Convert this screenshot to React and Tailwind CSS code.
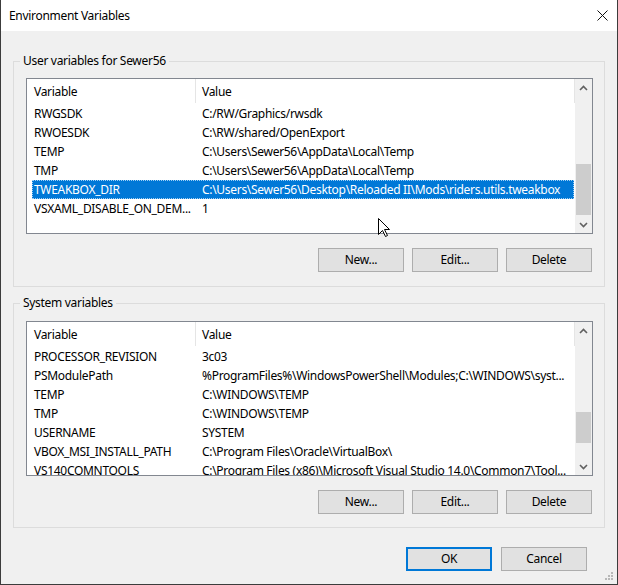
import React from "react";

const userRows = [
  ["RWGSDK", "C:/RW/Graphics/rwsdk"],
  ["RWOESDK", "C:\\RW/shared/OpenExport"],
  ["TEMP", "C:\\Users\\Sewer56\\AppData\\Local\\Temp"],
  ["TMP", "C:\\Users\\Sewer56\\AppData\\Local\\Temp"],
  ["TWEAKBOX_DIR", "C:\\Users\\Sewer56\\Desktop\\Reloaded II\\Mods\\riders.utils.tweakbox"],
  ["VSXAML_DISABLE_ON_DEM...", "1"],
];

const systemRows = [
  ["PROCESSOR_REVISION", "3c03"],
  ["PSModulePath", "%ProgramFiles%\\WindowsPowerShell\\Modules;C:\\WINDOWS\\syst..."],
  ["TEMP", "C:\\WINDOWS\\TEMP"],
  ["TMP", "C:\\WINDOWS\\TEMP"],
  ["USERNAME", "SYSTEM"],
  ["VBOX_MSI_INSTALL_PATH", "C:\\Program Files\\Oracle\\VirtualBox\\"],
  ["VS140COMNTOOLS", "C:\\Program Files (x86)\\Microsoft Visual Studio 14.0\\Common7\\Tool..."],
];

const Chevron = ({ up }) => (
  <svg width="9" height="6" viewBox="0 0 9 6">
    <polyline
      points={up ? "1,5 4.5,1.5 8,5" : "1,1 4.5,4.5 8,1"}
      fill="none"
      stroke="#606060"
      strokeWidth="1.6"
    />
  </svg>
);

// vertical scrollbar, thumb placed by margin inside the track
const Scrollbar = ({ thumbTop, thumbHeight }) => (
  <div className="w-[17px] shrink-0 bg-[#f0f0f0] flex flex-col">
    <div className="h-[17px] flex items-center justify-center">
      <Chevron up />
    </div>
    <div className="flex-1 flex flex-col">
      <div style={{ height: thumbTop }} />
      <div className="mx-[1px] bg-[#cdcdcd]" style={{ height: thumbHeight }} />
    </div>
    <div className="h-[17px] flex items-center justify-center">
      <Chevron />
    </div>
  </div>
);

const ListView = ({ rows, selected, height, thumbTop, thumbHeight }) => (
  <div className="flex border border-[#828790] bg-white" style={{ height }}>
    <div className="flex-1 min-w-0 flex flex-col overflow-hidden">
      <div className="h-[25px] shrink-0 flex items-start">
        <div className="w-[168px] h-[24px] pl-[7px] pt-[1px] flex items-center">Variable</div>
        <div className="w-px h-[24px] bg-[#e5e5e5]" />
        <div className="flex-1 h-[24px] pl-[6px] pt-[1px] flex items-center">Value</div>
        <div className="w-px h-[24px] bg-[#e5e5e5]" />
      </div>
      {rows.map(([name, value], i) => (
        <div
          key={i}
          className={`h-[19px] shrink-0 ml-[5px] mr-[1px] flex items-center whitespace-nowrap ${
            i === selected ? "bg-[#0078d7] text-white outline outline-1 outline-dotted outline-offset-[-1px] outline-[#9fd0f5]" : ""
          }`}
        >
          <div className="w-[163px] shrink-0 pl-[2px] overflow-hidden">{name}</div>
          <div className="flex-1 pl-[7px] overflow-hidden">{value}</div>
        </div>
      ))}
    </div>
    <Scrollbar thumbTop={thumbTop} thumbHeight={thumbHeight} />
  </div>
);

const Button = ({ children, def }) => (
  <button
    className={`w-[86px] h-[24px] bg-[#e1e1e1] flex items-center justify-center ${
      def ? "border-2 border-[#0078d7]" : "border border-[#adadad]"
    }`}
  >
    {children}
  </button>
);

const Group = ({ label, className, children }) => (
  <div className={`relative mx-[12px] border border-[#dcdcdc] pl-[12px] pr-[11px] ${className}`}>
    <span className="absolute left-[6px] top-[-9px] bg-[#f0f0f0] px-[3px] leading-[16px]">{label}</span>
    {children}
  </div>
);

export default function App() {
  return (
    <div
      className="relative w-[618px] h-[585px] bg-[#f0f0f0] border-l border-r border-b border-[#3c3c3c] text-[12px] tracking-[-0.3px] text-black overflow-hidden"
      style={{ fontFamily: '"Noto Sans", "Open Sans", sans-serif' }}
    >
      {/* title bar */}
      <div className="h-[31px] bg-white flex items-center justify-between pl-[8px] pr-[9px]">
        <span>Environment Variables</span>
        <svg width="11" height="11" viewBox="0 0 11 11">
          <path d="M0.5 0.5 L10.5 10.5 M10.5 0.5 L0.5 10.5" stroke="#111" strokeWidth="1" />
        </svg>
      </div>

      <Group label="User variables for Sewer56" className="mt-[30px] pt-[16px] pb-[14px]">
        <ListView rows={userRows} selected={4} height={156} thumbTop={68} thumbHeight={51} />
        <div className="mt-[14px] pr-[1px] flex justify-end gap-[8px]">
          <Button>New...</Button>
          <Button>Edit...</Button>
          <Button>Delete</Button>
        </div>
      </Group>

      <Group label="System variables" className="mt-[16px] pt-[17px] pb-[13px]">
        <ListView rows={systemRows} selected={-1} height={155} thumbTop={73} thumbHeight={31} />
        <div className="mt-[14px] pr-[1px] flex justify-end gap-[8px]">
          <Button>New...</Button>
          <Button>Edit...</Button>
          <Button>Delete</Button>
        </div>
      </Group>

      <div className="mt-[19px] pr-[30px] flex justify-end gap-[9px]">
        <Button def>OK</Button>
        <Button>Cancel</Button>
      </div>

      {/* mouse cursor */}
      <svg className="absolute left-[377px] top-[218px]" width="13" height="20" viewBox="0 0 13 20">
        <path d="M0.5 0.5 L0.5 16.5 L4.5 12.5 L7.5 18.5 L9.5 17.5 L6.5 11.5 L11.5 11.5 Z" fill="#fff" stroke="#000" strokeWidth="1" />
      </svg>

      {/* resize grip */}
      <svg className="absolute right-[3px] bottom-[3px]" width="9" height="9" viewBox="0 0 9 9">
        <rect x="6" y="0" width="2" height="2" fill="#b8b8b8" />
        <rect x="3" y="3" width="2" height="2" fill="#b8b8b8" />
        <rect x="6" y="3" width="2" height="2" fill="#b8b8b8" />
        <rect x="0" y="6" width="2" height="2" fill="#b8b8b8" />
        <rect x="3" y="6" width="2" height="2" fill="#b8b8b8" />
        <rect x="6" y="6" width="2" height="2" fill="#b8b8b8" />
      </svg>
    </div>
  );
}
